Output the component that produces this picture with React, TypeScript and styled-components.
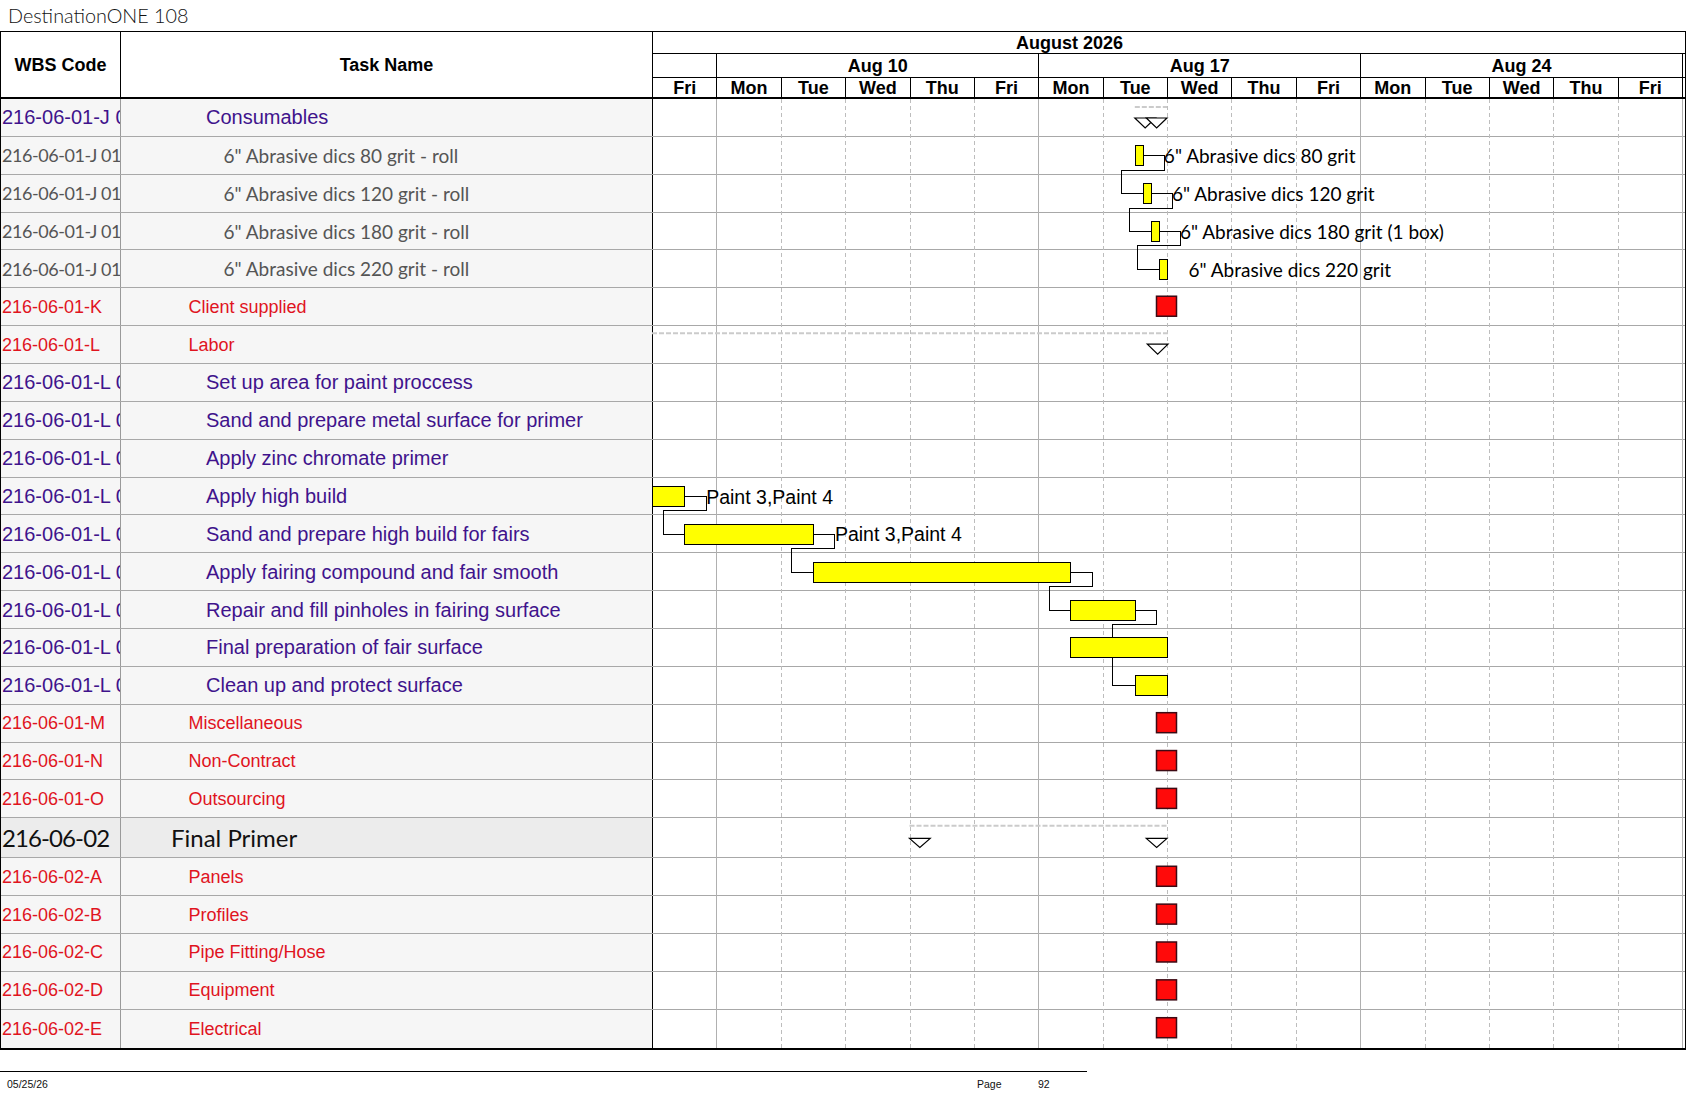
import React from 'react';
import styled, { createGlobalStyle, css } from 'styled-components';

const DW = 64.375;
const RH = 37.86;
const BIG_RH = 40;

type Kind = 'purple' | 'grey' | 'red' | 'big';
interface RowData { wbs: string; task: string; kind: Kind; level: number }

const rows: RowData[] = [
  { wbs: '216-06-01-J 01', task: 'Consumables', kind: 'purple', level: 5 },
  { wbs: '216-06-01-J 01', task: '6" Abrasive dics 80 grit - roll', kind: 'grey', level: 6 },
  { wbs: '216-06-01-J 01', task: '6" Abrasive dics 120 grit - roll', kind: 'grey', level: 6 },
  { wbs: '216-06-01-J 01', task: '6" Abrasive dics 180 grit - roll', kind: 'grey', level: 6 },
  { wbs: '216-06-01-J 01', task: '6" Abrasive dics 220 grit - roll', kind: 'grey', level: 6 },
  { wbs: '216-06-01-K', task: 'Client supplied', kind: 'red', level: 4 },
  { wbs: '216-06-01-L', task: 'Labor', kind: 'red', level: 4 },
  { wbs: '216-06-01-L 01', task: 'Set up area for paint proccess', kind: 'purple', level: 5 },
  { wbs: '216-06-01-L 02', task: 'Sand and prepare metal surface for primer', kind: 'purple', level: 5 },
  { wbs: '216-06-01-L 03', task: 'Apply zinc chromate primer', kind: 'purple', level: 5 },
  { wbs: '216-06-01-L 04', task: 'Apply high build', kind: 'purple', level: 5 },
  { wbs: '216-06-01-L 05', task: 'Sand and prepare high build for fairs', kind: 'purple', level: 5 },
  { wbs: '216-06-01-L 06', task: 'Apply fairing compound and fair smooth', kind: 'purple', level: 5 },
  { wbs: '216-06-01-L 07', task: 'Repair and fill pinholes in fairing surface', kind: 'purple', level: 5 },
  { wbs: '216-06-01-L 08', task: 'Final preparation of fair surface', kind: 'purple', level: 5 },
  { wbs: '216-06-01-L 09', task: 'Clean up and protect surface', kind: 'purple', level: 5 },
  { wbs: '216-06-01-M', task: 'Miscellaneous', kind: 'red', level: 4 },
  { wbs: '216-06-01-N', task: 'Non-Contract', kind: 'red', level: 4 },
  { wbs: '216-06-01-O', task: 'Outsourcing', kind: 'red', level: 4 },
  { wbs: '216-06-02', task: 'Final Primer', kind: 'big', level: 3 },
  { wbs: '216-06-02-A', task: 'Panels', kind: 'red', level: 4 },
  { wbs: '216-06-02-B', task: 'Profiles', kind: 'red', level: 4 },
  { wbs: '216-06-02-C', task: 'Pipe Fitting/Hose', kind: 'red', level: 4 },
  { wbs: '216-06-02-D', task: 'Equipment', kind: 'red', level: 4 },
  { wbs: '216-06-02-E', task: 'Electrical', kind: 'red', level: 4 },
];

const heights = rows.map((r) => (r.kind === 'big' ? BIG_RH : RH));
const tops: number[] = [];
let acc = 0;
heights.forEach((h) => {
  tops.push(acc);
  acc += h;
});
const bodyH = acc;
const mid = (i: number) => tops[i] + heights[i] / 2;
const X = (d: number) => d * DW;

const days = ['Fri', 'Mon', 'Tue', 'Wed', 'Thu', 'Fri', 'Mon', 'Tue', 'Wed', 'Thu', 'Fri', 'Mon', 'Tue', 'Wed', 'Thu', 'Fri'];
const weeks = [
  { label: '', days: 1 },
  { label: 'Aug 10', days: 5 },
  { label: 'Aug 17', days: 5 },
  { label: 'Aug 24', days: 5 },
];

const Global = createGlobalStyle`
  html, body { margin: 0; padding: 0; background: #fff; }
  body {
    font-family: "Liberation Sans", Arial, sans-serif;
    width: 1687px;
    height: 1097px;
    overflow: hidden;
  }
`;

const Page = styled.div`
  width: 1687px;
`;

const Title = styled.div`
  height: 30px;
  box-sizing: border-box;
  padding-left: 8px;
  display: flex;
  align-items: center;
  margin-bottom: 1px;
  font-family: Lato, "Open Sans", sans-serif;
  font-weight: 300;
  font-size: 19.8px;
  color: #111;
`;

const Sheet = styled.div`
  width: 1686px;
  box-sizing: border-box;
  border: 1px solid #000;
  border-bottom-width: 2px;
`;

const Columns = css`
  display: grid;
  grid-template-columns: 120px 532px 1032px;
`;

const Header = styled.div`
  ${Columns};
  height: 67px;
  box-sizing: border-box;
  border-bottom: 2px solid #000;
`;

const HeadText = css`
  font-family: "Liberation Sans", Arial, sans-serif;
  font-weight: bold;
  font-size: 18px;
  color: #000;
  line-height: 1;
`;

const HeadCell = styled.div`
  ${HeadText};
  display: flex;
  align-items: center;
  justify-content: center;
  border-right: 1px solid #000;
`;

const Timescale = styled.div`
  display: flex;
  flex-direction: column;
`;

const MonthRow = styled.div`
  ${HeadText};
  height: 22px;
  box-sizing: border-box;
  border-bottom: 1px solid #000;
  display: flex;
  align-items: center;
  padding-left: 363px;
`;

const TierRow = styled.div<{ $h?: number }>`
  display: flex;
  ${(p) => (p.$h ? `height: ${p.$h}px;` : 'flex: 1;')}
  box-sizing: border-box;
  ${(p) => (p.$h ? 'border-bottom: 1px solid #000;' : '')}
`;

const TierCell = styled.div<{ $w?: number }>`
  ${HeadText};
  ${(p) => (p.$w ? `width: ${p.$w}px; border-right: 1px solid #000;` : 'flex: 1;')}
  flex-shrink: 0;
  box-sizing: border-box;
  display: flex;
  align-items: center;
  justify-content: center;
  white-space: nowrap;
`;

const Body = styled.div`
  position: relative;
`;

const Row = styled.div<{ $h: number; $last: boolean }>`
  ${Columns};
  height: ${(p) => p.$h}px;
  box-sizing: border-box;
  border-bottom: ${(p) => (p.$last ? 'none' : '1px solid #a8a8a8')};
`;

const kindStyle: Record<Kind, ReturnType<typeof css>> = {
  purple: css`
    font-family: "Liberation Sans", Arial, sans-serif;
    font-size: 20px;
    color: #40138c;
  `,
  grey: css`
    font-family: Lato, "Open Sans", sans-serif;
    font-size: 19px;
    color: #555;
  `,
  red: css`
    font-family: "Liberation Sans", Arial, sans-serif;
    font-size: 18px;
    color: #e0141e;
  `,
  big: css`
    font-family: Lato, "Open Sans", sans-serif;
    font-size: 24px;
    color: #111;
  `,
};

const wbsTweak: Record<Kind, string> = {
  purple: '',
  grey: 'font-size: 18px; letter-spacing: -0.45px;',
  red: '',
  big: 'letter-spacing: -0.9px;',
};

const TextCell = css<{ $kind: Kind }>`
  ${(p) => kindStyle[p.$kind]};
  background: ${(p) => (p.$kind === 'big' ? '#ececec' : '#f6f6f6')};
  display: flex;
  align-items: center;
  overflow: hidden;
  white-space: nowrap;
  line-height: 1;
`;

const WbsCell = styled.div<{ $kind: Kind }>`
  ${TextCell};
  padding-left: 1px;
  border-right: 1px solid #9a9a9a;
  ${(p) => wbsTweak[p.$kind]}
`;

const TaskCell = styled.div<{ $kind: Kind; $level: number }>`
  ${TextCell};
  padding-left: ${(p) => 50 + (p.$level - 3) * 17.5}px;
  border-right: 1px solid #000;
`;

const GanttCell = styled.div`
  background: #fff;
`;

const Chart = styled.svg`
  position: absolute;
  left: 651px;
  top: 0;
  overflow: visible;
  pointer-events: none;
`;

const GridLine = styled.line<{ $solid: boolean }>`
  stroke: ${(p) => (p.$solid ? '#b0b0b0' : '#bdbdbd')};
  stroke-width: 1;
  stroke-dasharray: ${(p) => (p.$solid ? 'none' : '4 3')};
  shape-rendering: crispEdges;
`;

const TaskBar = styled.rect`
  fill: #ffff00;
  stroke: #000;
  stroke-width: 1;
  shape-rendering: crispEdges;
`;

const Link = styled.path`
  fill: none;
  stroke: #000;
  stroke-width: 1;
  shape-rendering: crispEdges;
`;

const SummaryLine = styled.line`
  stroke: #cbcbcb;
  stroke-width: 2;
  stroke-dasharray: 5 2;
`;

const SummaryMark = styled.path`
  fill: #fff;
  stroke: #000;
  stroke-width: 1.2;
`;

const Milestone = styled.rect`
  fill: #ff0a0a;
  stroke: #3d0a14;
  stroke-width: 1.5;
`;

const BarLabel = styled.text<{ $arial?: boolean }>`
  font-family: ${(p) => (p.$arial ? '"Liberation Sans", Arial, sans-serif' : 'Lato, "Open Sans", sans-serif')};
  font-size: ${(p) => (p.$arial ? '19.5px' : '19px')};
  fill: #000;
  dominant-baseline: central;
`;

const Footer = styled.div`
  margin-top: 21px;
  width: 1087px;
  height: 25px;
  box-sizing: border-box;
  border-top: 1px solid #000;
  padding-left: 7px;
  display: grid;
  grid-template-columns: 970px 61px 1fr;
  align-items: center;
  font-family: "Liberation Sans", Arial, sans-serif;
  font-size: 10.5px;
  color: #111;
`;

const FooterText = styled.span``;

const bars = [
  { row: 1, a: 7.5, b: 7.625 },
  { row: 2, a: 7.625, b: 7.75 },
  { row: 3, a: 7.75, b: 7.875 },
  { row: 4, a: 7.875, b: 8 },
  { row: 10, a: 0, b: 0.5 },
  { row: 11, a: 0.5, b: 2.5 },
  { row: 12, a: 2.5, b: 6.5 },
  { row: 13, a: 6.5, b: 7.5 },
  { row: 14, a: 6.5, b: 8 },
  { row: 15, a: 7.5, b: 8 },
];

const fs = (p: number, s: number) => {
  const P = bars[p];
  const S = bars[s];
  const e = X(P.b);
  const yP = mid(P.row);
  const yB = tops[P.row] + heights[P.row] - 4.5;
  const sx = X(S.a);
  const yS = mid(S.row);
  return `M${e},${yP} H${e + 22} V${yB} H${sx - 21} V${yS} H${sx}`;
};

const xo = X(7.5) - 22;
const links = [
  fs(0, 1),
  fs(1, 2),
  fs(2, 3),
  fs(4, 5),
  fs(5, 6),
  fs(6, 7),
  `M${X(7.5)},${mid(13)} H${X(7.5) + 22} V${tops[13] + RH - 4.5} H${xo} V${mid(14) - 10}`,
  `M${xo},${mid(14) + 10} V${mid(15)} H${X(7.5)}`,
];

const labels = [
  { row: 1, x: X(7.625) + 21, text: '6" Abrasive dics 80 grit' },
  { row: 2, x: X(7.75) + 21, text: '6" Abrasive dics 120 grit' },
  { row: 3, x: X(7.875) + 21, text: '6" Abrasive dics 180 grit (1 box)' },
  { row: 4, x: X(8) + 21.5, text: '6" Abrasive dics 220 grit' },
  { row: 10, x: X(0.5) + 22, text: 'Paint 3,Paint 4', arial: true },
  { row: 11, x: X(2.5) + 22, text: 'Paint 3,Paint 4', arial: true },
];

const TW = 20.7;
const startMark = (x0: number, y0: number, y1: number) => `M${x0},${y0} H${x0 + TW} L${x0 + TW / 2},${y1} Z`;
const endMark = (x1: number, y0: number, y1: number) => `M${x1 - TW},${y0} H${x1} L${x1 - TW / 2},${y1} Z`;

const summaries = [
  { row: 0, a: X(7.5), b: X(8), ly: 8, t0: 19, t1: 29, start: true },
  { row: 6, a: 0, b: X(8) + 1, ly: 7, t0: 18, t1: 28, start: false },
  { row: 19, a: X(4), b: X(8), ly: 7.5, t0: 20, t1: 29, start: true },
];

const milestoneRows = [5, 16, 17, 18, 20, 21, 22, 23, 24];
const mondays = [1, 6, 11, 16];

function GanttChart() {
  return (
    <Chart width={1033} height={bodyH}>
      {Array.from({ length: 16 }, (_, i) => i + 1).map((k) => (
        <GridLine key={k} $solid={mondays.includes(k)} x1={X(k) + 0.5} x2={X(k) + 0.5} y1={0} y2={bodyH} />
      ))}
      {summaries.map((s) => (
        <g key={s.row}>
          <SummaryLine x1={s.a} x2={s.b} y1={tops[s.row] + s.ly} y2={tops[s.row] + s.ly} />
          {s.start && <SummaryMark d={startMark(s.a, tops[s.row] + s.t0, tops[s.row] + s.t1)} />}
          <SummaryMark d={endMark(s.b, tops[s.row] + s.t0, tops[s.row] + s.t1)} />
        </g>
      ))}
      {links.map((d, i) => (
        <Link key={i} d={d} />
      ))}
      {bars.map((b, i) => (
        <TaskBar key={i} x={X(b.a) + 0.5} y={Math.round(mid(b.row) - 10.5) + 0.5} width={X(b.b) - X(b.a)} height={20} />
      ))}
      {milestoneRows.map((r) => (
        <Milestone key={r} x={X(8) - 10.5} y={mid(r) - 11} width={20} height={20} />
      ))}
      {labels.map((l, i) => (
        <BarLabel key={i} x={l.x} y={mid(l.row)} $arial={l.arial}>
          {l.text}
        </BarLabel>
      ))}
    </Chart>
  );
}

export default function App() {
  return (
    <Page>
      <Global />
      <Title>DestinationONE 108</Title>
      <Sheet>
        <Header>
          <HeadCell>WBS Code</HeadCell>
          <HeadCell>Task Name</HeadCell>
          <Timescale>
            <MonthRow>August 2026</MonthRow>
            <TierRow $h={24}>
              {weeks.map((w, i) => (
                <TierCell key={i} $w={w.days * DW}>
                  {w.label}
                </TierCell>
              ))}
              <TierCell />
            </TierRow>
            <TierRow>
              {days.map((d, i) => (
                <TierCell key={i} $w={DW}>
                  {d}
                </TierCell>
              ))}
              <TierCell />
            </TierRow>
          </Timescale>
        </Header>
        <Body>
          {rows.map((r, i) => (
            <Row key={i} $h={heights[i]} $last={i === rows.length - 1}>
              <WbsCell $kind={r.kind}>{r.wbs}</WbsCell>
              <TaskCell $kind={r.kind} $level={r.level}>
                {r.task}
              </TaskCell>
              <GanttCell />
            </Row>
          ))}
          <GanttChart />
        </Body>
      </Sheet>
      <Footer>
        <FooterText>05/25/26</FooterText>
        <FooterText>Page</FooterText>
        <FooterText>92</FooterText>
      </Footer>
    </Page>
  );
}
